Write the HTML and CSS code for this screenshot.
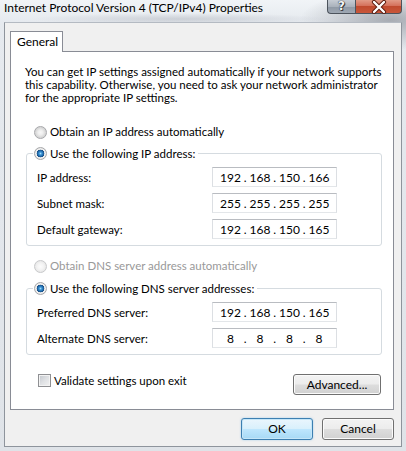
FILE: index.html
```html
<!DOCTYPE html>
<html>
<head>
<meta charset="utf-8">
<title>Internet Protocol Version 4 (TCP/IPv4) Properties</title>
<link rel="stylesheet" href="styles.css">
</head>
<body>
<div class="window">
  <div class="titlebar">
    <div class="title">Internet Protocol Version 4 (TCP/IPv4) Properties</div>
    <div class="caption-buttons">
      <div class="cap help">?</div>
      <div class="cap close">
        <svg width="47" height="14" viewBox="0 0 47 14">
          <path d="M18 2 L28 12 M28 2 L18 12" stroke="#5a1a0e" stroke-width="4.2" stroke-linecap="round"/>
          <path d="M18 2 L28 12 M28 2 L18 12" stroke="#ffffff" stroke-width="2.4" stroke-linecap="round"/>
        </svg>
      </div>
    </div>
  </div>
  <div class="client">
    <div class="tabs"><div class="tab">General</div></div>
    <div class="panel">
      <p class="intro">You can get IP settings assigned automatically if your network supports<br>this capability. Otherwise, you need to ask your network administrator<br>for the appropriate IP settings.</p>

      <div class="option first"><span class="radio"></span>Obtain an IP address automatically</div>

      <div class="group">
        <div class="legend"><span class="radio checked"></span>Use the following IP address:</div>
        <div class="fields">
          <div class="label">IP address:</div>
          <div class="ip"><span class="seg">192</span><span class="dot">.</span><span class="seg">168</span><span class="dot">.</span><span class="seg">150</span><span class="dot">.</span><span class="seg">166</span></div>
          <div class="label">Subnet mask:</div>
          <div class="ip"><span class="seg">255</span><span class="dot">.</span><span class="seg">255</span><span class="dot">.</span><span class="seg">255</span><span class="dot">.</span><span class="seg">255</span></div>
          <div class="label">Default gateway:</div>
          <div class="ip"><span class="seg">192</span><span class="dot">.</span><span class="seg">168</span><span class="dot">.</span><span class="seg">150</span><span class="dot">.</span><span class="seg">165</span></div>
        </div>
      </div>

      <div class="option disabled"><span class="radio"></span>Obtain DNS server address automatically</div>

      <div class="group dns">
        <div class="legend"><span class="radio checked"></span>Use the following DNS server addresses:</div>
        <div class="fields">
          <div class="label">Preferred DNS server:</div>
          <div class="ip"><span class="seg">192</span><span class="dot">.</span><span class="seg">168</span><span class="dot">.</span><span class="seg">150</span><span class="dot">.</span><span class="seg">165</span></div>
          <div class="label">Alternate DNS server:</div>
          <div class="ip"><span class="seg">8</span><span class="dot">.</span><span class="seg">8</span><span class="dot">.</span><span class="seg">8</span><span class="dot">.</span><span class="seg">8</span></div>
        </div>
      </div>

      <div class="bottom-row">
        <div class="check"><span class="checkbox"></span>Validate settings upon exit</div>
        <div class="btn advanced">Advanced...</div>
      </div>
    </div>
    <div class="buttons">
      <div class="btn ok">OK</div>
      <div class="btn cancel">Cancel</div>
    </div>
  </div>
</div>
</body>
</html>
```

FILE: styles.css
```css
* { box-sizing: border-box; }

html, body {
  margin: 0;
  padding: 0;
}

body {
  width: 406px;
  height: 451px;
  overflow: hidden;
  font-family: Lato, "Noto Sans", sans-serif;
  font-size: 11.5px;
  color: #000;
  background: #dfe4ea;
}

.window {
  width: 406px;
  height: 451px;
  display: flex;
  flex-direction: column;
  background:
    radial-gradient(ellipse 90px 30px at 390px 20px, rgba(90, 95, 105, 0.45), rgba(90, 95, 105, 0) 100%),
    radial-gradient(ellipse 150px 6px at 180px 19px, rgba(150, 155, 165, 0.35), rgba(150, 155, 165, 0) 100%),
    linear-gradient(to bottom, #f1f4f7 0, #e6eaef 22px, #dfe3e8 100%);
}

.titlebar {
  height: 22px;
  display: flex;
  align-items: flex-start;
  flex-shrink: 0;
}

.title {
  padding-left: 4px;
  font-size: 12px;
  line-height: 16px;
  color: #000;
  white-space: nowrap;
}

.caption-buttons {
  margin-left: auto;
  margin-right: 4px;
  display: flex;
  height: 14px;
}

.cap {
  height: 14px;
  border: 1px solid #4c535c;
  border-top: none;
}

.help {
  width: 28px;
  border-right: none;
  border-bottom-left-radius: 4px;
  background: linear-gradient(to bottom, #c6ccd4 0, #aab2bc 50%, #8e98a4 51%, #9fa8b3 100%);
  color: #f4f6f8;
  font-family: "DejaVu Sans", sans-serif;
  font-weight: bold;
  font-size: 12px;
  line-height: 12px;
  text-align: center;
  text-shadow: 0 0 1px #222, 0 0 1px #222, 1px 1px 0 #444;
}

.close {
  width: 47px;
  border-bottom-right-radius: 4px;
  background: linear-gradient(to bottom, #e29a86 0, #d4705a 45%, #c04a2e 50%, #c9573a 100%);
}

.close svg { display: block; }

.client {
  flex: 1;
  margin: 0 4px 4px 4px;
  background: #f0f0f0;
  border: 1px solid #8e949c;
  border-top-color: #b4bac2;
  padding: 8px 7px 0 5px;
  display: flex;
  flex-direction: column;
}

.tabs {
  display: flex;
  position: relative;
  z-index: 1;
}

.tab {
  width: 53px;
  height: 21px;
  margin-bottom: -1px;
  border: 1px solid #898c95;
  border-bottom: none;
  background: #fff;
  padding-left: 6px;
  line-height: 19px;
  font-size: 12px;
}

.panel {
  width: 384px;
  height: 359px;
  border: 1px solid #898c95;
  background: #fff;
  display: flex;
  flex-direction: column;
  align-items: flex-start;
}

.intro {
  margin: 13px 0 0 14px;
  line-height: 13px;
  white-space: nowrap;
}

.option {
  height: 16px;
  line-height: 16px;
  display: flex;
  align-items: center;
  padding-left: 23px;
  white-space: nowrap;
}

.option.first { margin-top: 20px; }
.option.disabled { margin-top: 12px; color: #999; }

.radio {
  width: 13px;
  height: 13px;
  border-radius: 50%;
  border: 1px solid #a7a8ab;
  margin-right: 3px;
  flex-shrink: 0;
  background: radial-gradient(circle at 50% 50%, #f7f7f7 0, #eeeeee 2.5px, #dadada 4.5px, #d2d3d4 6px);
}

.radio.checked {
  background: radial-gradient(circle at 50% 50%, #a9dcf7 0, #3f98d8 1.3px, #1f67a8 2.8px, #184f85 3.6px, #eaeaea 4.1px, #f4f4f4 4.8px, #d4d4d4 6px);
}

.disabled .radio {
  border-color: #c8c9cb;
  background: radial-gradient(circle at 50% 50%, #fbfbfb 0, #f4f4f4 3px, #e6e6e6 6px);
}

.group {
  margin-top: 13px;
  margin-left: 15px;
  width: 356px;
  border: 1px solid #d5dbe0;
  border-radius: 3px;
  padding: 0 44px 6px 10px;
}

.group.dns { margin-top: 14px; }

.legend {
  display: flex;
  align-items: center;
  width: fit-content;
  height: 16px;
  margin: -9px 0 0 -4px;
  padding: 0 3px 0 1px;
  background: #fff;
  white-space: nowrap;
}

.fields {
  margin-top: 6px;
  display: grid;
  grid-template-columns: 1fr 125px;
  grid-auto-rows: 20px;
  row-gap: 6px;
  align-items: center;
}

.label { white-space: nowrap; }

.ip {
  height: 20px;
  border: 1px solid;
  border-color: #b9bcc1 #dcdfe3 #e3e6e9 #dcdfe3;
  display: flex;
  align-items: center;
  padding-left: 6px;
  background: #fff;
  font-size: 12px;
}

.seg {
  width: 23px;
  text-align: center;
}

.dot {
  width: 6.5px;
  text-align: center;
}

.bottom-row {
  margin-top: 19px;
  width: 100%;
  display: flex;
  align-items: flex-start;
}

.check {
  margin-left: 27px;
  margin-top: -1px;
  display: flex;
  align-items: center;
  height: 14px;
  white-space: nowrap;
}

.checkbox {
  width: 13px;
  height: 13px;
  border: 1px solid #8f9093;
  margin-right: 3px;
  background: linear-gradient(135deg, #c3c7cd 0, #dfe1e4 50%, #f2f2f2 100%);
  box-shadow: inset 0 0 0 1px #f3f3f3;
}

.btn {
  height: 22px;
  border: 1px solid #707070;
  border-radius: 3px;
  background: linear-gradient(to bottom, #f3f3f3 0, #ececec 48%, #dddddd 52%, #d1d1d1 100%);
  box-shadow: inset 0 0 0 1px #fbfbfb;
  display: flex;
  align-items: center;
  justify-content: center;
  line-height: 20px;
  font-size: 12px;
}

.advanced {
  margin-left: auto;
  margin-right: 12px;
  width: 88px;
  height: 21px;
}

.buttons {
  margin-top: 8px;
  display: flex;
  justify-content: flex-end;
  gap: 9px;
}

.ok, .cancel { width: 72px; }

.ok {
  border-color: #3c7fb1;
  background: linear-gradient(to bottom, #eaf6fd 0, #d9f0fc 48%, #bee6fd 52%, #a7d9f5 100%);
  box-shadow: inset 0 0 0 1px #c5e6f8, 0 0 2px rgba(80, 170, 230, 0.5);
}
```
